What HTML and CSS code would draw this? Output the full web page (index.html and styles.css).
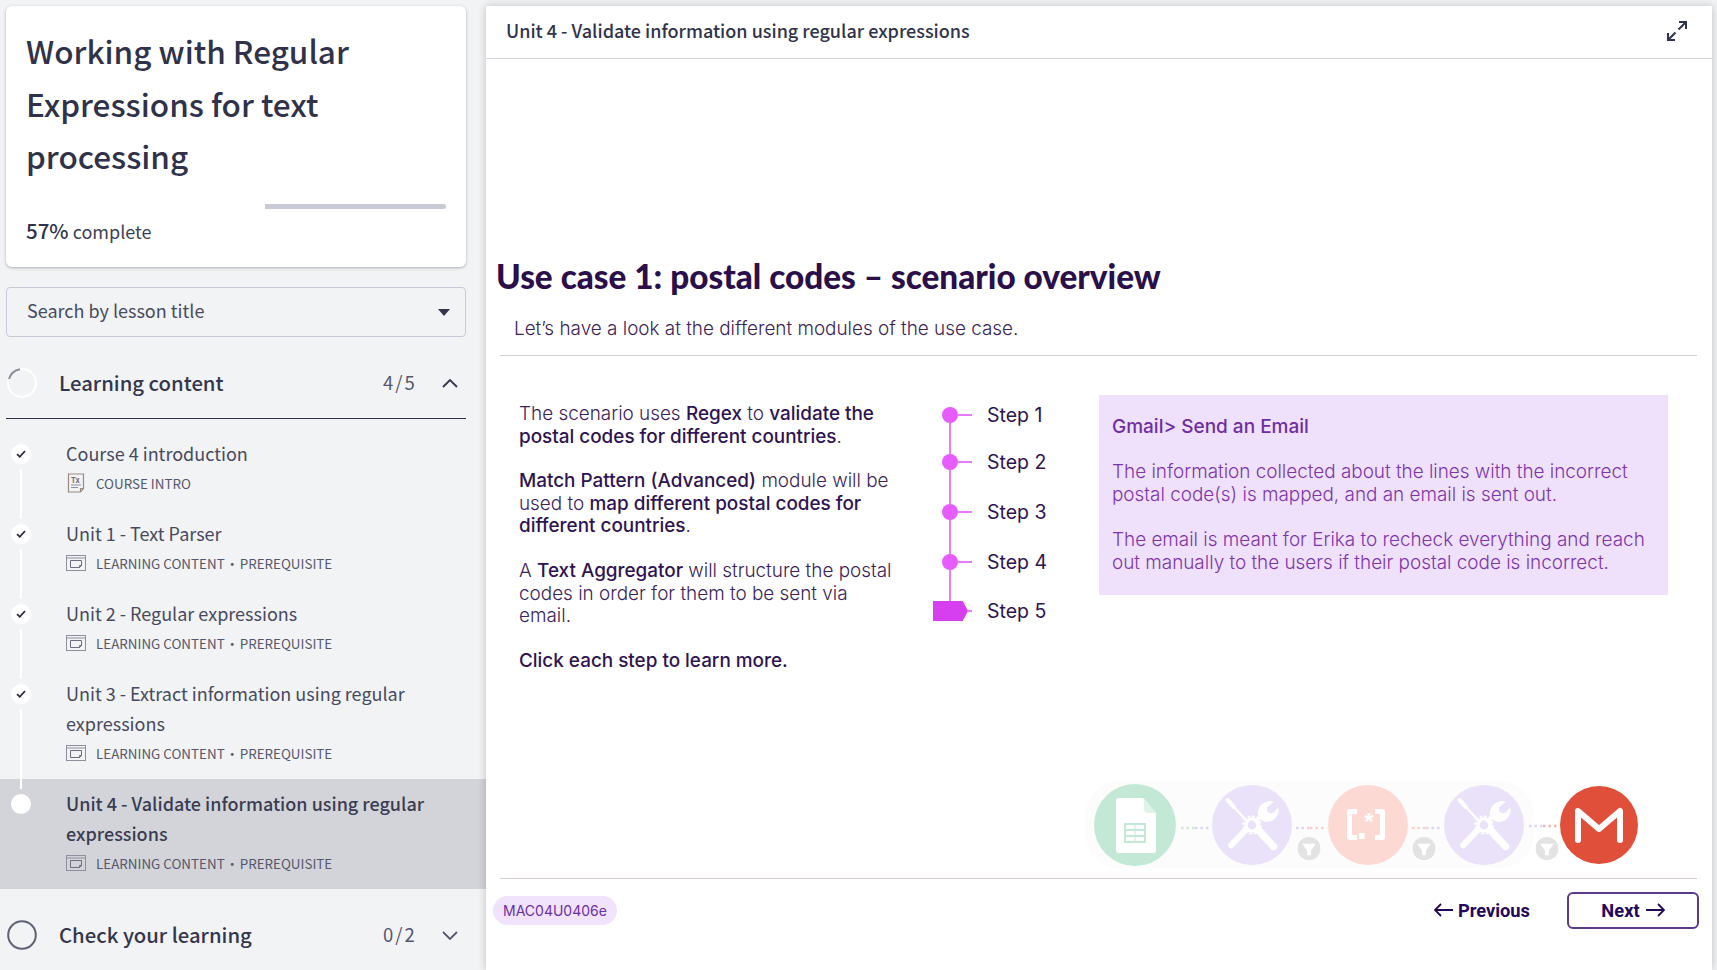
FILE: index.html
```html
<!DOCTYPE html>
<html>
  <head>
    <meta charset="utf-8" />
    <title>Working with Regular Expressions for text processing</title>
    <link rel="stylesheet" href="styles.css">
  </head>
  <body>
    <svg class="defs" width="0" height="0">
      <symbol id="slides" viewBox="0 0 20 16">
        <rect x="0.5" y="0.5" width="19" height="15" fill="none" stroke="#8d8f9e" />
        <path d="M1 3h18" stroke="#8d8f9e" />
        <path d="M4.5 5.5h11v5l-2 2h-9z M15.500 10.500h-2v2" fill="none" stroke="#6c6e80" />
      </symbol>
      <symbol id="tools" viewBox="0 0 80 80">
        <g fill="none" stroke="#fff">
          <path d="M4 3l9 10" stroke-width="6" stroke-linecap="round" />
          <path d="M13 13l19 21" stroke-width="3" />
          <path d="M44 36l12-13" stroke-width="6" />
          <path d="M30 48L9 70" stroke-width="9" stroke-linecap="round" />
          <path d="M50 48l22 24" stroke-width="11" stroke-linecap="round" />
          <circle cx="40" cy="40" r="9" stroke-width="5" />
          <circle cx="40" cy="40" r="13" stroke-width="3" stroke-dasharray="4 2.800" />
        </g>
        <path d="M50 30c-4-10 1-22 12-25 4-1 7-1 10 1L62 14l1 7 7 2 9-9c1 5 0 10-3 14-5 7-14 9-20 6z" fill="#fff" />
      </symbol>
      <symbol id="funnel" viewBox="0 0 24 24">
        <circle cx="12" cy="12" r="12" fill="#e3e3e3" />
        <path d="M5 7h14l-5 7v5h-4v-5z" fill="#fff" />
      </symbol>
    </svg>

    <aside class="sidebar">
      <div class="course-card">
        <h1 class="course-title">Working with Regular Expressions for text processing</h1>
        <div class="progress"><div class="progress-fill" style="width: 57%"></div></div>
        <p class="progress-text"><b>57%</b> complete</p>
      </div>

      <div class="lesson-search">
        <span>Search by lesson title</span>
        <i class="caret"></i>
      </div>

      <div class="section-head open">
        <svg class="section-ring" width="30" height="30" viewBox="0 0 30 30">
          <circle cx="15" cy="15" r="14" fill="none" stroke="#fff" stroke-width="2" />
          <path d="M2 11A14 14 0 0 1 13 1.200" fill="none" stroke="#8a8c9a" stroke-width="2" />
        </svg>
        <span class="section-title">Learning content</span>
        <span class="section-count">4/5</span>
        <svg class="chevron" width="16" height="9" viewBox="0 0 16 9">
          <path d="M1 8l7-7 7 7" fill="none" stroke="#33364c" stroke-width="1.800" />
        </svg>
      </div>

      <div class="lesson">
        <div class="rail">
          <span class="rail-dot"><svg width="10" height="8" viewBox="0 0 10 8"><path d="M1 4.200l2.800 2.600L9 1" fill="none" stroke="#23253a" stroke-width="1.700" /></svg></span>
          <span class="rail-line"></span>
        </div>
        <div class="lesson-body">
          <div class="lesson-title">Course 4 introduction</div>
          <div class="lesson-meta">
            <svg class="meta-icon" width="20" height="20" viewBox="0 0 20 20">
              <path d="M2.500 1h15v14.500l-3 3.500h-12z M17.500 15.500h-3v3.500" fill="none" stroke="#9a8a80" stroke-width="1.200" />
              <path d="M5 12h10M5 14.500h7" stroke="#8d8f9e" />
              <text x="5" y="9.500" class="tx">Tx</text>
            </svg>
            COURSE INTRO
          </div>
        </div>
      </div>

      <div class="lesson">
        <div class="rail">
          <span class="rail-dot"><svg width="10" height="8" viewBox="0 0 10 8"><path d="M1 4.200l2.800 2.600L9 1" fill="none" stroke="#23253a" stroke-width="1.700" /></svg></span>
          <span class="rail-line"></span>
        </div>
        <div class="lesson-body">
          <div class="lesson-title">Unit 1 - Text Parser</div>
          <div class="lesson-meta"><svg class="meta-icon" width="20" height="16"><use href="#slides" /></svg>LEARNING CONTENT<span class="sep">·</span>PREREQUISITE</div>
        </div>
      </div>

      <div class="lesson">
        <div class="rail">
          <span class="rail-dot"><svg width="10" height="8" viewBox="0 0 10 8"><path d="M1 4.200l2.800 2.600L9 1" fill="none" stroke="#23253a" stroke-width="1.700" /></svg></span>
          <span class="rail-line"></span>
        </div>
        <div class="lesson-body">
          <div class="lesson-title">Unit 2 - Regular expressions</div>
          <div class="lesson-meta"><svg class="meta-icon" width="20" height="16"><use href="#slides" /></svg>LEARNING CONTENT<span class="sep">·</span>PREREQUISITE</div>
        </div>
      </div>

      <div class="lesson">
        <div class="rail">
          <span class="rail-dot"><svg width="10" height="8" viewBox="0 0 10 8"><path d="M1 4.200l2.800 2.600L9 1" fill="none" stroke="#23253a" stroke-width="1.700" /></svg></span>
          <span class="rail-line"></span>
        </div>
        <div class="lesson-body">
          <div class="lesson-title">Unit 3 - Extract information using regular expressions</div>
          <div class="lesson-meta"><svg class="meta-icon" width="20" height="16"><use href="#slides" /></svg>LEARNING CONTENT<span class="sep">·</span>PREREQUISITE</div>
        </div>
      </div>

      <div class="lesson current">
        <div class="rail">
          <span class="rail-dot"></span>
        </div>
        <div class="lesson-body">
          <div class="lesson-title">Unit 4 - Validate information using regular expressions</div>
          <div class="lesson-meta"><svg class="meta-icon" width="20" height="16"><use href="#slides" /></svg>LEARNING CONTENT<span class="sep">·</span>PREREQUISITE</div>
        </div>
      </div>

      <div class="section-head">
        <svg class="section-ring" width="30" height="30" viewBox="0 0 30 30">
          <circle cx="15" cy="15" r="13.800" fill="none" stroke="#5f6275" stroke-width="2" />
        </svg>
        <span class="section-title">Check your learning</span>
        <span class="section-count">0/2</span>
        <svg class="chevron" width="16" height="9" viewBox="0 0 16 9">
          <path d="M1 1l7 7 7-7" fill="none" stroke="#55586c" stroke-width="1.800" />
        </svg>
      </div>
    </aside>

    <main class="player">
      <header class="player-head">
        <span class="player-title">Unit 4 - Validate information using regular expressions</span>
        <svg width="20" height="20" viewBox="0 0 20 20">
          <path d="M12 1h7v7M19 1l-7.500 7.500M8 19H1v-7M1 19l7.500-7.500" fill="none" stroke="#2f3250" stroke-width="2" />
        </svg>
      </header>

      <div class="slide">
        <h2 class="slide-title">Use case 1: postal codes – scenario overview</h2>
        <p class="slide-sub">Let’s have a look at the different modules of the use case.</p>
        <div class="rule"></div>

        <div class="slide-cols">
          <div class="intro">
            <p>The scenario uses <b>Regex</b> to <b>validate the postal codes for different countries</b>.</p>
            <p><b>Match Pattern (Advanced)</b> module will be used to <b>map different postal codes for different countries</b>.</p>
            <p>A <b>Text Aggregator</b> will structure the postal codes in order for them to be sent via email.</p>
            <p><b>Click each step to learn more.</b></p>
          </div>

          <div class="steps">
            <div class="step"><i class="step-dot"></i><i class="step-tick"></i>Step 1</div>
            <div class="step"><i class="step-dot"></i><i class="step-tick"></i>Step 2</div>
            <div class="step"><i class="step-dot"></i><i class="step-tick"></i>Step 3</div>
            <div class="step"><i class="step-dot"></i><i class="step-tick"></i>Step 4</div>
            <div class="step active"><i class="step-flag"></i><i class="step-tick"></i>Step 5</div>
          </div>

          <div class="step-info">
            <h3>Gmail&gt; Send an Email</h3>
            <p>The information collected about the lines with the incorrect postal code(s) is mapped, and an email is sent out.</p>
            <p>The email is meant for Erika to recheck everything and reach out manually to the users if their postal code is incorrect.</p>
          </div>
        </div>

        <div class="workflow">
          <svg width="560" height="100" viewBox="0 0 560 100">
            <rect x="5" y="3" width="449" height="87" rx="34" fill="#fcfcfc" />

            <g fill="none" stroke-width="2.500" stroke-dasharray="2.500 3">
              <path d="M101 50h14" stroke="#cfe9d4" /><path d="M115 50h14" stroke="#dcd6f2" />
              <path d="M216 50h14" stroke="#dcd6f2" /><path d="M230 50h14" stroke="#fbcfc8" />
              <path d="M332 50h14" stroke="#fbcfc8" /><path d="M346 50h14" stroke="#dcd6f2" />
              <path d="M449 48h14" stroke="#dcd6f2" /><path d="M463 48h14" stroke="#f4b4a8" />
            </g>

            <circle cx="55" cy="47" r="41" fill="#c3e9d6" />
            <path d="M39 20h24l13 15v37q0 3-3 3H39q-3 0-3-3V23q0-3 3-3z" fill="#fff" />
            <path d="M64 20l12 15H68q-4 0-4-4z" fill="#dff3e8" />
            <rect x="44" y="45" width="22" height="20" fill="#c3e9d6" />
            <g fill="#fff">
              <rect x="46" y="47" width="8.500" height="4" /><rect x="55.500" y="47" width="8.500" height="4" />
              <rect x="46" y="53" width="8.500" height="4" /><rect x="55.500" y="53" width="8.500" height="4" />
              <rect x="46" y="59" width="8.500" height="4" /><rect x="55.500" y="59" width="8.500" height="4" />
            </g>

            <circle cx="172" cy="47" r="40" fill="#e9e2f9" />
            <use href="#tools" x="145" y="20" width="54" height="54" />

            <circle cx="288" cy="47" r="40" fill="#fdd9d3" />
            <g fill="none" stroke="#fff" stroke-width="5" stroke-linejoin="round">
              <path d="M277 33.500h-7.500v26h7.500" />
              <path d="M295 33.500h7.500v26h-7.500" />
            </g>
            <rect x="279" y="55" width="5.500" height="6" fill="#fff" />
            <text x="289" y="52" class="regex-star">*</text>

            <circle cx="404" cy="47" r="40" fill="#e9e2f9" />
            <use href="#tools" x="377" y="20" width="54" height="54" />

            <circle cx="519" cy="47" r="39" fill="#e04f3a" />
            <path d="M498 62V33l21 18 21-18v29" fill="none" stroke="#fff" stroke-width="6" stroke-linecap="round" stroke-linejoin="round" />

            <use href="#funnel" x="217.500" y="59" width="23" height="23" />
            <use href="#funnel" x="332.500" y="59" width="23" height="23" />
            <use href="#funnel" x="455.500" y="59" width="23" height="23" />
          </svg>
        </div>

        <div class="rule"></div>

        <footer class="slide-foot">
          <span class="slide-code">MAC04U0406e</span>
          <a class="nav-prev">
            <svg width="19" height="14" viewBox="0 0 19 14"><path d="M7 1L1 7l6 6M1 7h18" fill="none" stroke="#23085a" stroke-width="1.800" /></svg>
            Previous
          </a>
          <a class="nav-next">
            Next
            <svg width="19" height="14" viewBox="0 0 19 14"><path d="M12 1l6 6-6 6M18 7H0" fill="none" stroke="#23085a" stroke-width="1.800" /></svg>
          </a>
        </footer>
      </div>
    </main>
  </body>
</html>
```

FILE: styles.css
```css
* {
  box-sizing: border-box;
}

html,
body {
  margin: 0;
  height: 970px;
  overflow: hidden;
}

body {
  display: flex;
  background-color: #f2f3f5;
  font-family: "Noto Sans CJK SC", "Noto Sans", sans-serif;
  color: #3c3f55;
}

.defs {
  position: absolute;
}

/* left column */
.sidebar {
  flex: none;
  width: 486px;
  padding-top: 6px;
}

.course-card {
  width: 460px;
  height: 261px;
  margin-left: 6px;
  padding: 18px 20px 0 20px;
  background-color: white;
  border-radius: 6px;
  box-shadow: 0 1px 3px rgba(40, 44, 70, 0.35);
}

.course-title {
  margin: 0;
  font-size: 31.5px;
  font-weight: 500;
  line-height: 52.5px;
  color: #2f3249;
}

.progress {
  height: 5px;
  margin-top: 22px;
  background-color: #c8cbd6;
  border-radius: 3px;
}

.progress-fill {
  height: 5px;
  background-color: white;
}

.progress-text {
  margin: 6px 0 0;
  font-size: 18px;
  line-height: 30px;
}

.progress-text b {
  font-size: 20.500px;
  font-weight: 500;
  color: #2f3249;
}

.lesson-search {
  display: flex;
  justify-content: space-between;
  align-items: center;
  width: 460px;
  height: 50px;
  margin: 20px 0 0 6px;
  padding: 0 15px 0 20px;
  border: 1px solid #c8cbd6;
  border-radius: 4px;
  font-size: 18px;
  color: #484b60;
}

.lesson-search span {
  padding-bottom: 4px;
}

.caret {
  border-left: 6px solid transparent;
  border-right: 6px solid transparent;
  border-top: 7px solid #33364c;
}

.section-head {
  display: flex;
  align-items: center;
  width: 460px;
  height: 70px;
  margin-left: 6px;
  padding-left: 1px;
}

.section-head.open {
  height: 71px;
  margin-top: 11px;
  border-bottom: 1px solid #2c2f48;
  margin-bottom: 10px;
}

.section-head:last-child {
  margin-top: 11px;
}

.section-title {
  flex: 1;
  margin-left: 22px;
  padding-bottom: 2px;
  font-size: 20.300px;
  font-weight: 500;
  color: #33364c;
}

.section-count {
  width: 59px;
  padding-bottom: 2px;
  font-size: 18.500px;
  letter-spacing: 2px;
  color: #55586c;
}

.chevron {
  margin-right: 8px;
}

.lesson {
  display: flex;
}

.rail {
  position: relative;
  display: flex;
  flex-direction: column;
  align-items: center;
  flex: none;
  width: 20px;
  margin: 0 35px 0 11px;
  padding-top: 15px;
}

.rail-dot {
  display: flex;
  justify-content: center;
  align-items: center;
  flex: none;
  width: 20px;
  height: 20px;
  background-color: white;
  border-radius: 50%;
}

.rail-line {
  flex: 1;
  width: 2px;
  margin: 5px 0 -10px;
  background-color: white;
}

.lesson-body {
  flex: 1;
  padding: 9px 40px 11px 0;
}

.lesson-title {
  font-size: 18px;
  line-height: 30px;
  color: #474a5e;
}

.lesson-meta {
  display: flex;
  align-items: center;
  height: 30px;
  font-size: 13.400px;
  color: #55586c;
}

.meta-icon {
  flex: none;
  margin-right: 10px;
}

.tx {
  font-size: 7.500px;
  font-weight: 700;
  fill: #6c6e80;
}

.sep {
  width: 15px;
  text-align: center;
}

.lesson.current {
  background-color: #d3d4d9;
}

.lesson.current .lesson-title {
  font-weight: 500;
  color: #3a3d52;
}

/* player */
.player {
  display: flex;
  flex-direction: column;
  flex: none;
  width: 1226px;
  height: 964px;
  margin-top: 6px;
  background-color: white;
  box-shadow: 0 0 8px rgba(0, 0, 0, 0.22);
}

.player-head {
  display: flex;
  justify-content: space-between;
  align-items: center;
  flex: none;
  height: 53px;
  padding: 0 25px 3px 20px;
  border-bottom: 1px solid #d3d3e0;
  font-size: 18px;
  font-weight: 500;
  color: #30334a;
}

.player-title {
  padding-bottom: 2px;
}

.slide {
  display: flex;
  flex-direction: column;
  flex: 1;
  font-family: Inter, "Liberation Sans", sans-serif;
  color: #3a2358;
}

.slide-title {
  margin: 197px 0 0 10px;
  font-family: Lato, Inter, sans-serif;
  font-size: 33.300px;
  font-weight: 900;
  line-height: 40px;
  color: #2a0f4a;
}

.slide-sub {
  margin: 21px 0 0 28px;
  font-size: 18.900px;
  font-weight: 300;
  line-height: 24px;
}

.rule {
  flex: none;
  width: 1197px;
  height: 1px;
  margin-left: 14px;
  background-color: #d8cfd6;
}

.slide-sub + .rule {
  margin-top: 14px;
}

.slide-cols {
  display: grid;
  grid-template-columns: 414px 166px 569px;
  margin: 39px 0 0 33px;
}

.intro {
  width: 380px;
  padding-top: 8px;
  font-size: 18.900px;
  font-weight: 300;
  line-height: 22.600px;
}

.intro p {
  margin: 0 0 22px;
}

.intro b {
  font-weight: 500;
  color: #2e1450;
}

.steps {
  position: relative;
  display: flex;
  flex-direction: column;
  align-self: start;
  gap: 10px;
}

.steps::before {
  content: "";
  position: absolute;
  left: 16px;
  top: 20px;
  bottom: 20px;
  width: 2px;
  background-color: #e87bfb;
}

.step {
  position: relative;
  display: flex;
  align-items: center;
  height: 40px;
  font-size: 19.500px;
  color: #2e1450;
}

.step:first-child {
  margin-bottom: -3px;
}

.step:nth-child(4) {
  margin-bottom: -1px;
}

.step-dot {
  width: 16px;
  height: 16px;
  margin-left: 9px;
  background-color: #e65cff;
  border-radius: 50%;
}

.step-tick {
  width: 14px;
  height: 2px;
  margin-right: 15px;
  background-color: #e87bfb;
}

.step-flag {
  width: 35px;
  height: 20px;
  background-color: #d63ff0;
  clip-path: polygon(0 0, 85% 0, 100% 50%, 85% 100%, 0 100%);
}

.step.active .step-tick {
  width: 4px;
}

.step-info {
  align-self: start;
  height: 200px;
  padding: 20px 13px 0;
  background-color: #efe1fb;
  font-size: 18.900px;
  font-weight: 300;
  line-height: 23px;
  color: #7d35aa;
}

.step-info h3 {
  margin: 0;
  font-size: 19px;
  font-weight: 500;
  line-height: 23px;
  color: #6f2da0;
}

.step-info p {
  margin: 22px 0 0;
}

.workflow {
  display: flex;
  justify-content: flex-end;
  flex: none;
  margin-top: auto;
  padding-right: 72px;
}

.workflow svg {
  display: block;
}

.regex-star {
  font-family: "Liberation Sans", sans-serif;
  font-size: 24px;
  font-weight: 700;
  text-anchor: middle;
  fill: #fff;
}

.slide-foot {
  display: flex;
  align-items: center;
  flex: none;
  height: 37px;
  margin: 13px 0 41px;
  padding: 0 13px 0 7px;
  font-family: Roboto, sans-serif;
  font-size: 18.300px;
  font-weight: 700;
  color: #23085a;
}

.slide-code {
  height: 29px;
  margin-right: auto;
  padding: 0 10px;
  background-color: #f0e3fb;
  border-radius: 15px;
  font-family: Inter, sans-serif;
  font-size: 14px;
  font-weight: 400;
  line-height: 29px;
  color: #6b2fa3;
}

.nav-prev {
  display: flex;
  align-items: center;
  gap: 5px;
  margin-right: 37px;
  padding-bottom: 1px;
}

.nav-next {
  display: flex;
  justify-content: center;
  align-items: center;
  gap: 6px;
  width: 132px;
  height: 37px;
  padding-bottom: 1px;
  border: 2px solid #5b3a8c;
  border-radius: 6px;
}
```
